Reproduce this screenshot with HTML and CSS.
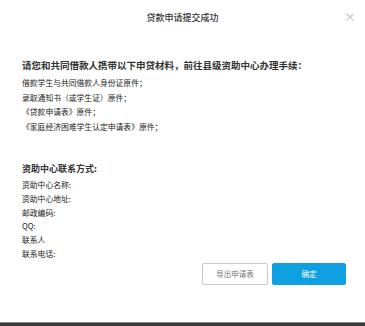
FILE: index.html
```html
<!DOCTYPE html>
<html lang="zh">
<head>
<meta charset="utf-8">
<link rel="stylesheet" href="styles.css">
</head>
<body>
<div class="page">
  <div class="dialog">
    <div class="header">
      <span class="title">贷款申请提交成功</span>
      <span class="close">×</span>
    </div>
    <div class="content">
      <div class="heading">请您和共同借款人携带以下申贷材料，前往县级资助中心办理手续：</div>
      <ul class="list">
        <li>借款学生与共同借款人身份证原件；</li>
        <li>录取通知书（或学生证）原件；</li>
        <li>《贷款申请表》原件；</li>
        <li>《家庭经济困难学生认定申请表》原件；</li>
      </ul>
      <div class="heading contact-heading">资助中心联系方式:</div>
      <ul class="list contact">
        <li>资助中心名称:</li>
        <li>资助中心地址:</li>
        <li>邮政编码:</li>
        <li>QQ:</li>
        <li>联系人</li>
        <li>联系电话:</li>
      </ul>
    </div>
    <div class="footer">
      <button class="btn btn-default">导出申请表</button>
      <button class="btn btn-primary">确定</button>
    </div>
  </div>
  <div class="bottom-bar"></div>
</div>
</body>
</html>
```
FILE: styles.css
```css
html, body {
  margin: 0;
  padding: 0;
  background: #fff;
}
body {
  font-family: "Noto Sans CJK SC", "Liberation Sans", sans-serif;
  color: #333;
}
.page {
  width: 365px;
  height: 326px;
  display: flex;
  flex-direction: column;
  overflow: hidden;
}
.dialog {
  flex: 1;
  display: flex;
  flex-direction: column;
}
.header {
  height: 34px;
  position: relative;
  display: flex;
  align-items: center;
  justify-content: center;
}
.title {
  font-size: 9px;
  font-weight: 500;
  color: #333;
}
.close {
  position: absolute;
  right: 9px;
  top: 10px;
  font-size: 12px;
  line-height: 14px;
  color: #bbb;
}
.content {
  padding: 24px 19px 0 22px;
}
.heading {
  font-size: 9.5px;
  font-weight: bold;
  line-height: 14px;
  color: #333;
}
.list {
  list-style: none;
  margin: 4px 0 0 0;
  padding: 0;
  font-size: 7.8px;
  line-height: 14.5px;
  color: #222;
}
.contact-heading {
  margin-top: 28px;
  font-size: 9px;
}
.list.contact {
  margin-top: 2px;
  line-height: 13.8px;
  font-size: 7.8px;
}
.footer {
  display: flex;
  justify-content: flex-end;
  gap: 4px;
  padding: 2px 19px 0 0;
}
.btn {
  height: 22px;
  font-family: inherit;
  font-size: 7.5px;
  border-radius: 2px;
  padding: 0;
  cursor: pointer;
}
.btn-default {
  width: 66px;
  background: #fff;
  border: 1px solid #c8c8c8;
  color: #777;
}
.btn-primary {
  width: 74px;
  background: #0fa0e2;
  border: 1px solid #0fa0e2;
  color: #fff;
}
.bottom-bar {
  height: 3px;
  background: #3a3a3a;
  border-top: 1px solid #888;
}
```
